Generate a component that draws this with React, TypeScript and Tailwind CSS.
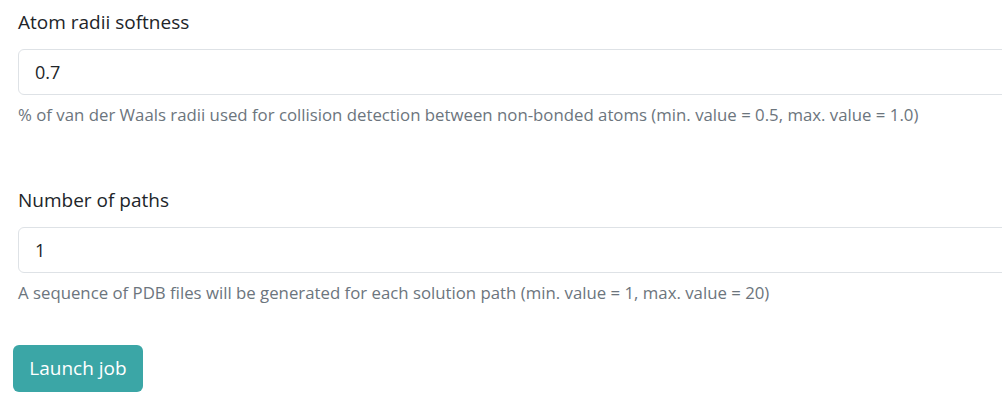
const FIELDS = [
  {
    label: "Atom radii softness",
    value: "0.7",
    help: "% of van der Waals radii used for collision detection between non-bonded atoms (min. value = 0.5, max. value = 1.0)",
  },
  {
    label: "Number of paths",
    value: "1",
    help: "A sequence of PDB files will be generated for each solution path (min. value = 1, max. value = 20)",
  },
];

export default function App() {
  return (
    <div className="h-[411px] w-[1002px] overflow-hidden bg-white font-['Open_Sans','Noto_Sans',sans-serif]">
      <div className="flex flex-col gap-[61px] pl-[18px] pt-[9px]">
        {FIELDS.map((f) => (
          <div key={f.label} className="flex flex-col">
            <label className="text-[19px] leading-[26px] text-[#212529]">{f.label}</label>
            <input
              readOnly
              value={f.value}
              className="mt-[14px] h-[46px] w-[1000px] rounded-[6px] border border-[#dee2e6] px-[16px] text-[18px] text-[#212529] outline-none"
            />
            <p className="mt-[9px] text-[16.8px] leading-[22px] text-[#6c757d]">{f.help}</p>
          </div>
        ))}
      </div>
      <div className="pl-[13px] pt-[41px]">
        <button className="h-[47px] w-[130px] rounded-[6px] bg-[#3ba6a6] text-[19px] text-white">
          Launch job
        </button>
      </div>
    </div>
  );
}
